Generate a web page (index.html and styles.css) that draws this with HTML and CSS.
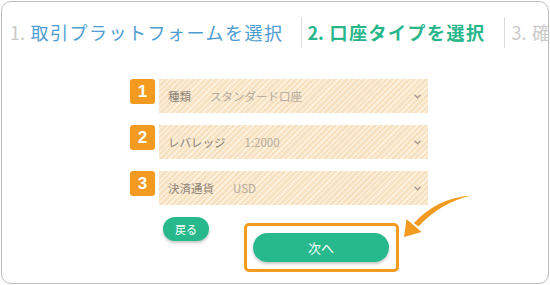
FILE: index.html
```html
<!DOCTYPE html>
<html lang="ja">
<head>
<meta charset="utf-8">
<link rel="stylesheet" href="styles.css">
</head>
<body>
<div class="card">
  <div class="steps">
    <div class="step step-done"><span class="num">1.</span> 取引プラットフォームを選択</div>
    <div class="step step-active"><span class="num">2.</span> 口座タイプを選択</div>
    <div class="step step-next"><span class="num">3.</span> 確認</div>
  </div>
  <div class="form">
    <div class="row">
      <div class="badge">1</div>
      <div class="field"><span class="label">種類</span><span class="value">スタンダード口座</span><svg class="chev" width="7" height="5" viewBox="0 0 7 5"><path d="M0.5 0.8 L3.5 3.8 L6.5 0.8" fill="none" stroke="#a8998a" stroke-width="1.3"/></svg></div>
    </div>
    <div class="row">
      <div class="badge">2</div>
      <div class="field"><span class="label">レバレッジ</span><span class="value">1:2000</span><svg class="chev" width="7" height="5" viewBox="0 0 7 5"><path d="M0.5 0.8 L3.5 3.8 L6.5 0.8" fill="none" stroke="#a8998a" stroke-width="1.3"/></svg></div>
    </div>
    <div class="row">
      <div class="badge">3</div>
      <div class="field"><span class="label">決済通貨</span><span class="value">USD</span><svg class="chev" width="7" height="5" viewBox="0 0 7 5"><path d="M0.5 0.8 L3.5 3.8 L6.5 0.8" fill="none" stroke="#a8998a" stroke-width="1.3"/></svg></div>
    </div>
    <div class="actions">
      <div class="btn btn-back">戻る</div>
      <div class="highlight"><div class="btn btn-next">次へ</div></div>
    </div>
  </div>
  <svg class="arrow" width="546" height="281" viewBox="2 2 546 281">
    <path d="M471 195.5 Q437 198 414 223 L418.5 226.5 Q440 203 471 195.5 Z" fill="#f39a21"/>
    <path d="M404 237 L406.5 219 L421.5 232 Z" fill="#f39a21"/>
  </svg>
</div>
</body>
</html>
```
FILE: styles.css
```css
html, body {
  margin: 0;
  padding: 0;
  background: #ffffff;
}
body {
  font-family: "Noto Sans CJK JP", "Noto Sans", sans-serif;
}
.card {
  position: relative;
  margin: 1px;
  width: 546px;
  height: 281px;
  border: 1px solid #bdbdbd;
  border-radius: 10px;
  overflow: hidden;
  background: #fff;
}
.steps {
  display: flex;
  margin-top: 15px;
  padding-left: 8px;
  white-space: nowrap;
}
.step {
  height: 31px;
  line-height: 31px;
  font-size: 18px;
  letter-spacing: 1.5px;
}
.step .num {
  letter-spacing: 0;
}
.step-done {
  color: #4e9dd1;
  padding-right: 17px;
  border-right: 1px solid #dcdcdc;
}
.step-done .num {
  color: #c9c9c9;
}
.step-active {
  color: #27b58a;
  font-weight: 700;
  padding-left: 6px;
  padding-right: 18px;
  border-right: 1px solid #dcdcdc;
}
.step-next {
  color: #cacaca;
  padding-left: 7px;
}
.form {
  margin-top: 31px;
  padding-left: 128px;
  display: flex;
  flex-direction: column;
  gap: 12px;
}
.row {
  display: flex;
  align-items: flex-start;
  gap: 4px;
}
.badge {
  width: 25px;
  height: 25px;
  border-radius: 3px;
  background: #f39a21;
  color: #fff;
  font-family: "Liberation Sans", Arial, sans-serif;
  font-weight: 700;
  font-size: 17px;
  line-height: 25px;
  text-align: center;
}
.field {
  width: 269px;
  height: 34px;
  box-sizing: border-box;
  padding: 0 7px 0 9px;
  display: flex;
  align-items: center;
  font-size: 11.5px;
  background: repeating-linear-gradient(135deg, #f7e1c0 0px, #f7e1c0 2.4px, #fcf0de 2.4px, #fcf0de 4px);
}
.label {
  color: #8d8378;
  margin-right: 19px;
}
.value {
  color: #b4aa9d;
  flex: 1;
}
.chev {
  display: block;
}
.actions {
  display: flex;
  align-items: flex-start;
  padding-left: 33px;
  gap: 35px;
}
.btn {
  background: #27b98b;
  color: #fff;
  text-align: center;
  box-shadow: 0 2px 3px rgba(0, 0, 0, 0.22);
}
.btn-back {
  width: 46px;
  height: 24px;
  line-height: 24px;
  border-radius: 12px;
  font-size: 11px;
}
.highlight {
  margin-top: 6px;
  padding: 7px 7px 7px 6px;
  border: 3px solid #f39a21;
  border-radius: 5px;
}
.btn-next {
  width: 136px;
  height: 29px;
  line-height: 29px;
  border-radius: 15px;
  font-size: 13px;
}
.arrow {
  position: absolute;
  left: 0;
  top: 0;
  pointer-events: none;
}
```
